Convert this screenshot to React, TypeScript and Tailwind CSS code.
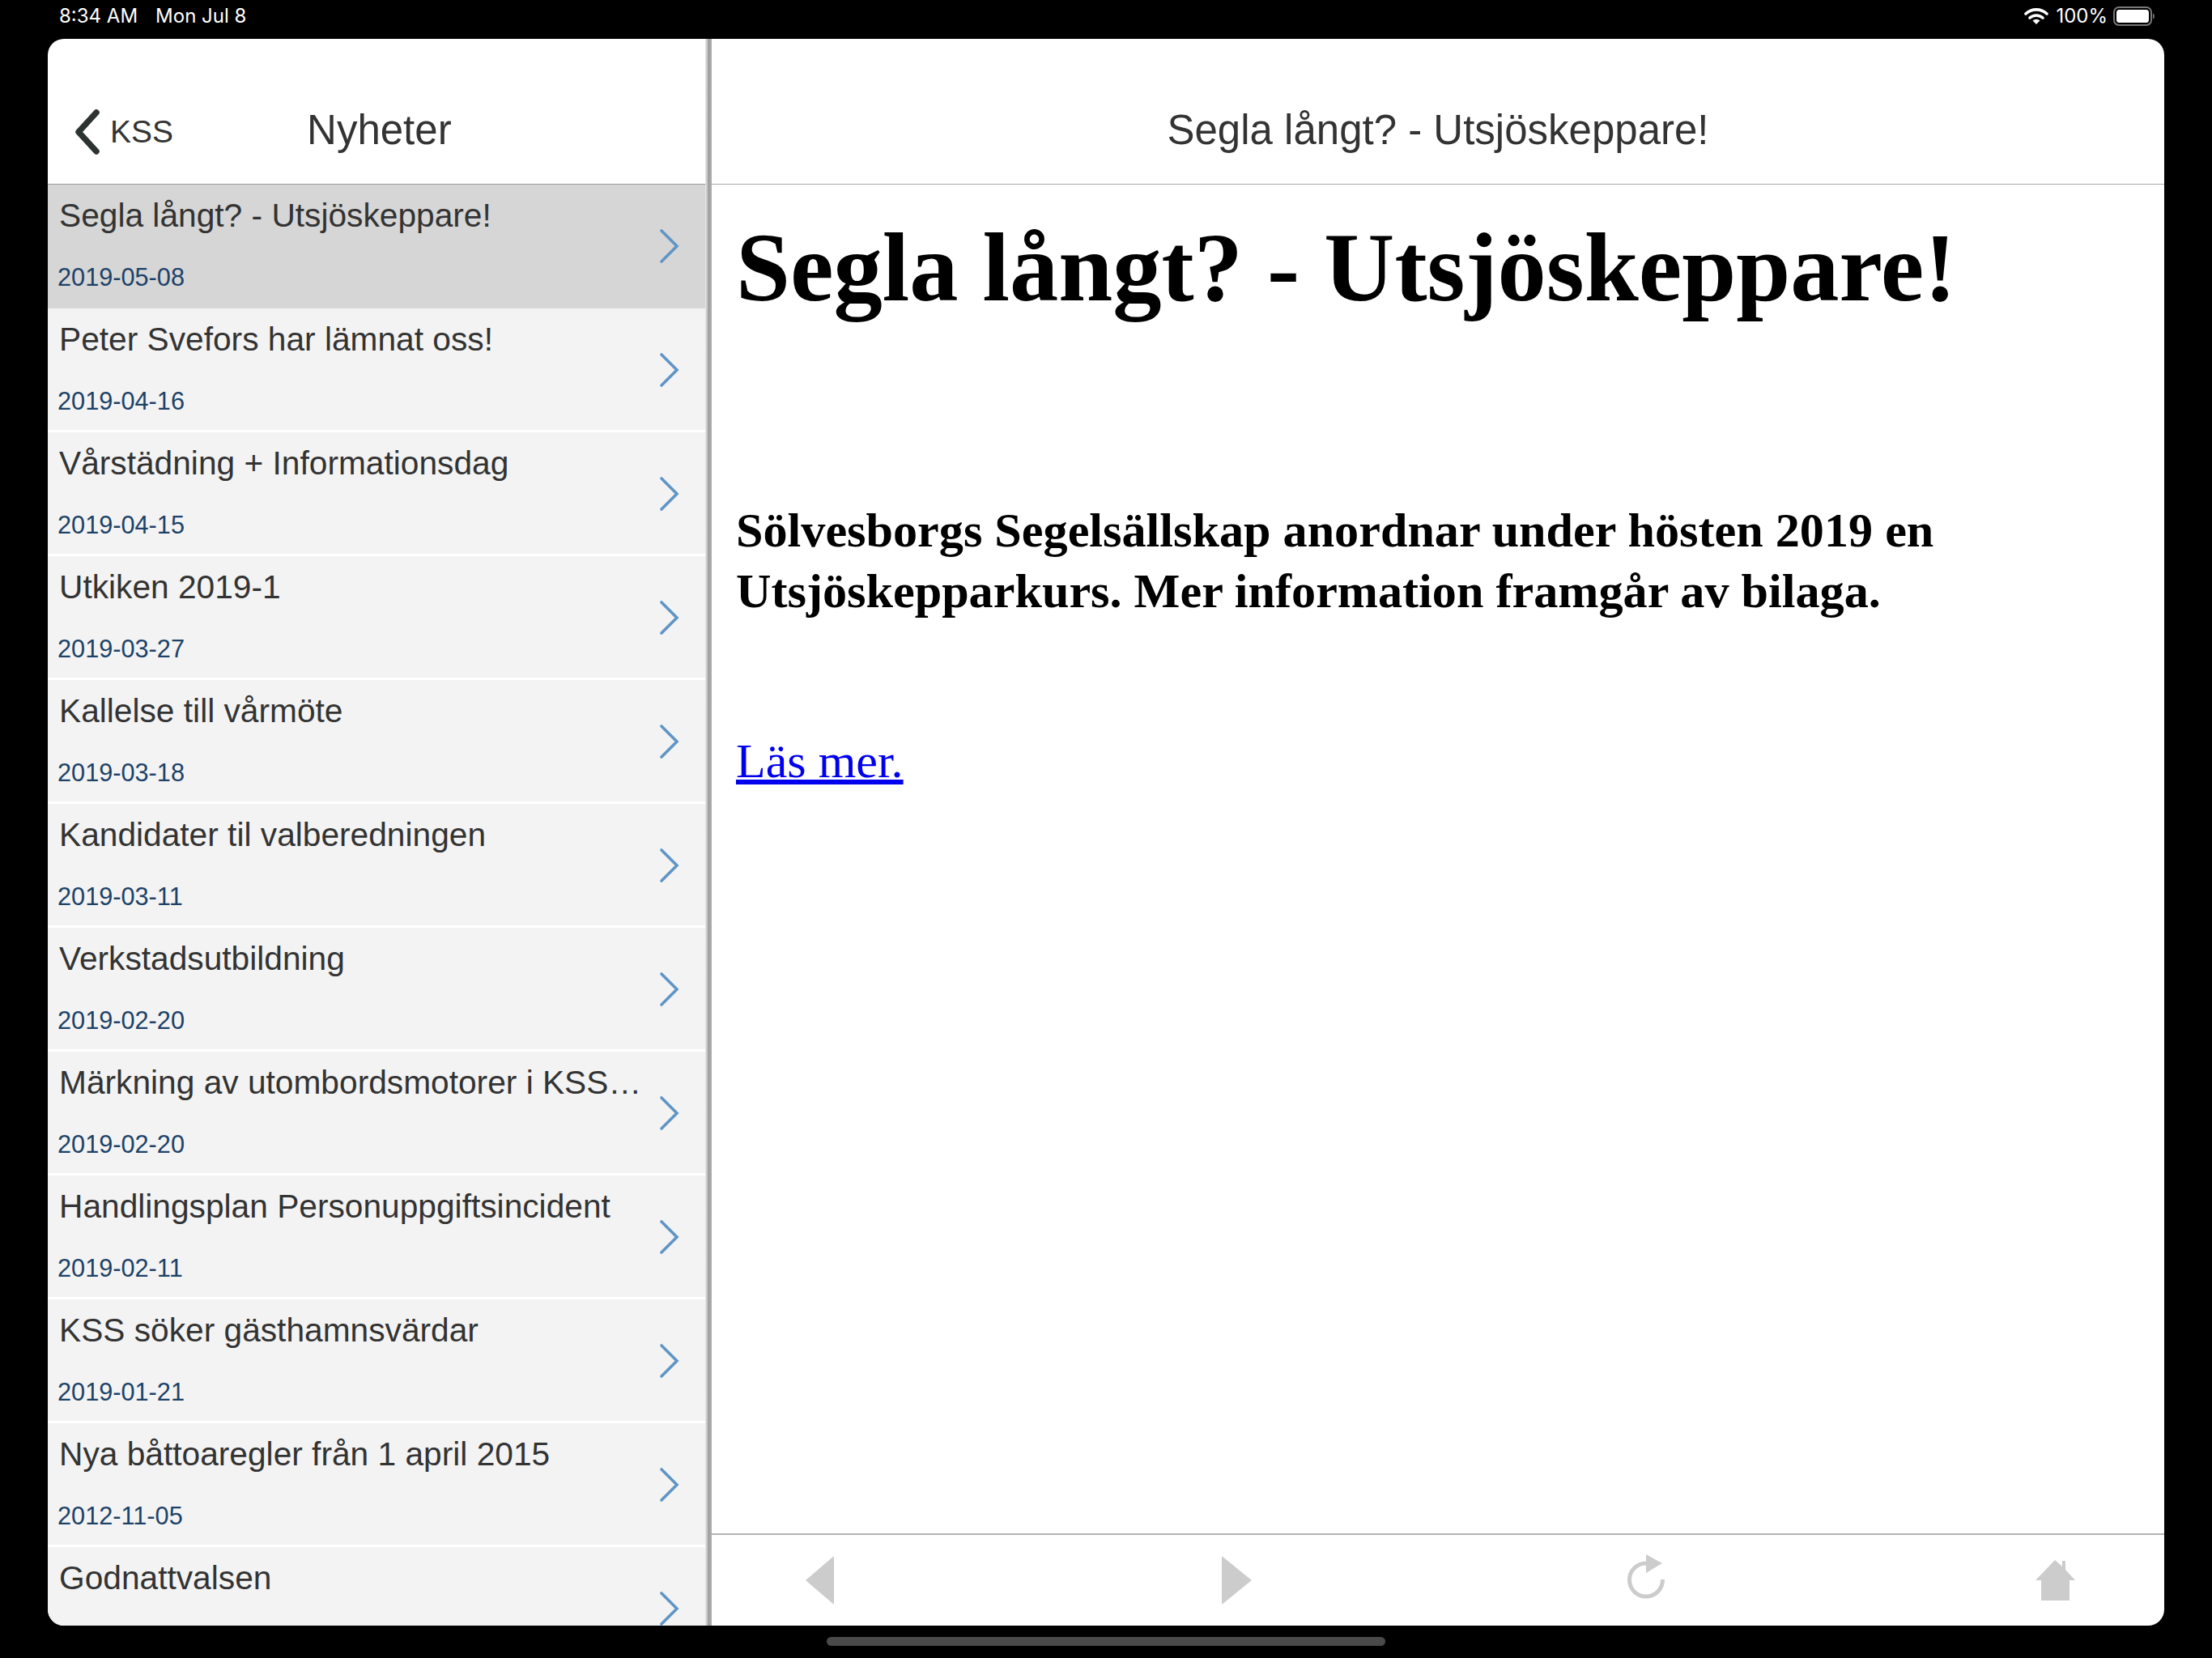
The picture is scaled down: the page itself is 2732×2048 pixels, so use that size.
import React from 'react';

const news = [
  { title: 'Segla långt? - Utsjöskeppare!', date: '2019-05-08', active: true },
  { title: 'Peter Svefors har lämnat oss!', date: '2019-04-16' },
  { title: 'Vårstädning + Informationsdag', date: '2019-04-15' },
  { title: 'Utkiken 2019-1', date: '2019-03-27' },
  { title: 'Kallelse till vårmöte', date: '2019-03-18' },
  { title: 'Kandidater til valberedningen', date: '2019-03-11' },
  { title: 'Verkstadsutbildning', date: '2019-02-20' },
  { title: 'Märkning av utombordsmotorer i KSS hamnar', date: '2019-02-20' },
  { title: 'Handlingsplan Personuppgiftsincident', date: '2019-02-11' },
  { title: 'KSS söker gästhamnsvärdar', date: '2019-01-21' },
  { title: 'Nya båttoaregler från 1 april 2015', date: '2012-11-05' },
  { title: 'Godnattvalsen' },
];

const StatusBar = () => (
  <div className="h-[48px] shrink-0 flex items-center pb-2 pl-[73px] pr-[68px] text-white text-[24px] font-['Inter',sans-serif]">
    <span>8:34 AM</span>
    <span className="ml-[22px]">Mon Jul 8</span>
    <svg className="ml-auto" width="30" height="22" viewBox="0 0 30 22">
      <path d="M2 8 A19 19 0 0 1 28 8" fill="none" stroke="#fff" strokeWidth="3.6" strokeLinecap="round" />
      <path d="M7 13 A12 12 0 0 1 23 13" fill="none" stroke="#fff" strokeWidth="3.6" strokeLinecap="round" />
      <path d="M10.5 16.5 A6.5 6.5 0 0 1 19.5 16.5 L15 21 Z" fill="#fff" />
    </svg>
    <span className="ml-[9px]">100%</span>
    <svg className="ml-[7px]" width="54" height="26" viewBox="0 0 54 26">
      <rect x="1" y="2" width="46" height="22" rx="6" fill="none" stroke="#777" strokeWidth="2" />
      <rect x="4" y="5" width="40" height="16" rx="3.5" fill="#fff" />
      <path d="M49 9.5 C51.5 10 51.5 16 49 16.5 Z" fill="#777" />
    </svg>
  </div>
);

const NewsRow = ({ title, date, active }: { title: string; date?: string; active?: boolean }) => (
  <div className={`h-[153px] shrink-0 flex border-b-[3px] ${active ? 'bg-[#d6d6d6] border-[#d6d6d6]' : 'bg-[#f3f3f3] border-white'}`}>
    <div className="w-[739px] pl-[14px] pt-[13px]">
      <div className="text-[40.7px] leading-[50px] text-[#333] truncate">{title}</div>
      {date && <div className="mt-[32px] -ml-[2px] text-[30.7px] leading-[40px] text-[#1d4268]">{date}</div>}
    </div>
    <div className="flex-1 flex items-center pl-[16px] pt-[1px]">
      <svg width="26" height="44" viewBox="0 0 26 44">
        <path d="M3 3 L22 22 L3 41" fill="none" stroke="#5f95c6" strokeWidth="3.6" strokeLinecap="round" />
      </svg>
    </div>
  </div>
);

const Sidebar = () => (
  <div className="w-[812px] shrink-0 flex flex-col overflow-hidden">
    <div className="h-[180px] shrink-0 flex items-center pt-[48px] pl-[31px] border-b border-[#999] text-[#333]">
      <svg className="mt-[3px]" width="36" height="56" viewBox="0 0 36 56">
        <path d="M29 4 L7 28 L29 52" fill="none" stroke="#2c3330" strokeWidth="7.5" strokeLinecap="round" strokeLinejoin="round" />
      </svg>
      <span className="ml-[10px] mt-[4px] text-[39px]">KSS</span>
      <span className="ml-[165px] text-[51px]">Nyheter</span>
    </div>
    <div className="flex-1 flex flex-col overflow-hidden">
      {news.map((n) => (
        <NewsRow key={n.title} {...n} />
      ))}
    </div>
  </div>
);

const Toolbar = () => (
  <div className="h-[114px] shrink-0 flex items-center border-t-2 border-[#b2b2b2] pl-[103px]">
    <svg width="60" height="64" viewBox="0 0 60 64">
      <path d="M13 32 L48 2 L48 62 Z" fill="#ccc" />
    </svg>
    <svg className="ml-[455px]" width="60" height="64" viewBox="0 0 60 64">
      <path d="M12 2 L49 32 L12 62 Z" fill="#ccc" />
    </svg>
    <svg className="ml-[446px]" width="60" height="64" viewBox="0 0 60 64">
      <path d="M50.5 31 A20.5 20.5 0 1 1 30 11" fill="none" stroke="#ccc" strokeWidth="5" />
      <path d="M30 0 L50 11 L30 23 Z" fill="#ccc" />
    </svg>
    <svg className="ml-[446px]" width="60" height="64" viewBox="0 0 60 64">
      <path d="M29 7 L38 15 L38 8 L42 8 L42 19 L54 32 L47 32 L47 57 L12 57 L12 32 L5 32 Z" fill="#ccc" />
    </svg>
  </div>
);

const Detail = () => (
  <div className="flex-1 flex flex-col min-w-0">
    <div className="h-[180px] shrink-0 flex items-center justify-center pt-[48px] border-b border-[#a8a8a8] text-[51px] text-[#333]">
      Segla långt? - Utsjöskeppare!
    </div>
    <div className="flex-1 pl-[30px] pr-[30px] font-['Liberation_Serif',serif] text-black">
      <h1 className="mt-[39px] text-[120.5px] leading-[128px] font-bold whitespace-nowrap">Segla långt? - Utsjöskeppare!</h1>
      <p className="mt-[222px] text-[60.2px] leading-[75px] font-bold">
        Sölvesborgs Segelsällskap anordnar under hösten 2019 en Utsjöskepparkurs. Mer information framgår av bilaga.
      </p>
      <a className="block mt-[136px] text-[60px] leading-[75px] text-[#0000ee] underline" href="#">
        Läs mer.
      </a>
    </div>
    <Toolbar />
  </div>
);

export default function App() {
  return (
    <div className="w-[2732px] h-[2048px] bg-black flex flex-col overflow-hidden font-['Liberation_Sans',sans-serif]">
      <StatusBar />
      <div className="ml-[59px] w-[2614px] h-[1960px] shrink-0 bg-white rounded-[20px] overflow-hidden flex">
        <Sidebar />
        <div className="w-[8px] shrink-0 bg-[linear-gradient(to_right,#ececec,#b5b5b5_40%,#8f8f8f_62%,#ababab_70%,#ababab)]" />
        <Detail />
      </div>
      <div className="ml-[1021px] mt-[14px] w-[690px] h-[11px] rounded-full bg-[#4a4a4a]" />
    </div>
  );
}
